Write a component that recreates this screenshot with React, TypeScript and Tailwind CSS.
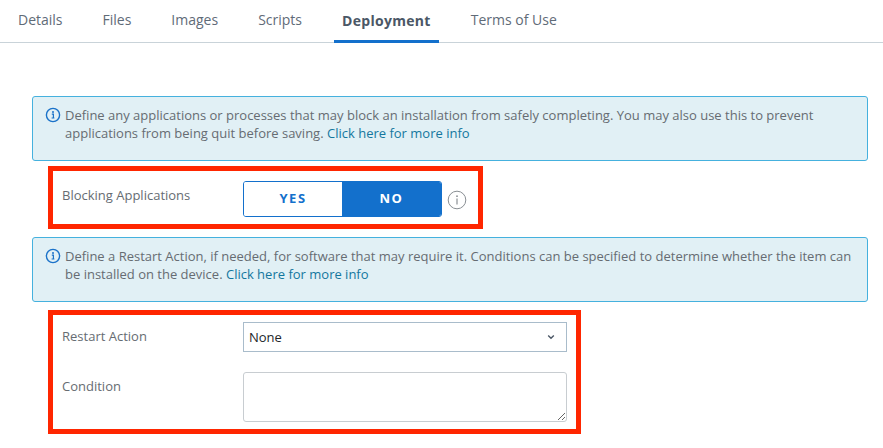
import { useState } from 'react';

const TABS = ['Details', 'Files', 'Images', 'Scripts', 'Deployment', 'Terms of Use'];

function InfoIcon({ className }: { className: string }) {
  return (
    <svg viewBox="0 0 16 16" fill="none" className={className}>
      <circle cx="8" cy="8" r="6.6" stroke="currentColor" strokeWidth="1.4" />
      <circle cx="8" cy="4.9" r="1" fill="currentColor" />
      <path d="M6.8 7.1H8.4V11H9.4M6.6 11H9.4" stroke="currentColor" strokeWidth="1.2" />
    </svg>
  );
}

function Alert({ children }: { children: React.ReactNode }) {
  return (
    <div className="flex h-[65px] rounded-[3px] border border-[#45b1de] bg-[#e1f0f5] pl-[12px] pr-[12px] pt-[9px] text-[13px] leading-[18px] text-[#666c72]">
      <InfoIcon className="mr-[4px] mt-[1px] h-[16px] w-[16px] shrink-0 text-[#1a72c9]" />
      <p>{children}</p>
    </div>
  );
}

export default function App() {
  const [blocking, setBlocking] = useState(false);

  return (
    <div className="h-[448px] w-[883px] overflow-hidden bg-white font-['Open_Sans',sans-serif]">
      <div className="flex h-[43px] gap-[24px] border-b border-[#c9d3d9] pl-[10px]">
        {TABS.map((tab) => (
          <div
            key={tab}
            className={`-mb-px flex h-[43px] items-center px-[8px] text-[14px] ${tab === 'Deployment' ? 'border-b-[3px] border-[#1370cc] pt-[1px] font-bold tracking-[0.3px] text-[#4b5766]' : 'pb-[4px] text-[#5f6b78]'}`}
          >
            {tab}
          </div>
        ))}
      </div>

      <div className="ml-[32px] w-[836px] pt-[53px]">
        <Alert>
          Define any applications or processes that may block an installation from safely completing. You may also use this to prevent
          <br />
          applications from being quit before saving. <span className="text-[#14779e]">Click here for more info</span>
        </Alert>

        <div className="ml-[16px] mt-[5px] flex h-[63px] w-[435px] border-[5px] border-[#ff2600] pl-[9px] pt-[10px]">
          <span className="w-[181px] pt-[5px] text-[13px] leading-[18px] text-[#666c72]">Blocking Applications</span>
          <div className="flex h-[36px] w-[199px] overflow-hidden rounded-[3px] border border-[#1370cc] text-[13px] font-bold tracking-[0.12em]">
            <button type="button" onClick={() => setBlocking(true)} className={`w-[98px] ${blocking ? 'bg-[#1370cc] text-white' : 'bg-white text-[#1370cc]'}`}>
              YES
            </button>
            <button type="button" onClick={() => setBlocking(false)} className={`flex-1 ${blocking ? 'bg-white text-[#1370cc]' : 'bg-[#1370cc] text-white'}`}>
              NO
            </button>
          </div>
          <svg viewBox="0 0 20 20" fill="none" className="ml-[5px] mt-[9px] h-[20px] w-[20px] text-[#8a8f94]">
            <circle cx="10" cy="10" r="8.8" stroke="currentColor" strokeWidth="1" />
            <circle cx="10" cy="6.2" r="0.9" fill="currentColor" />
            <path d="M10 8.6V14.4" stroke="currentColor" strokeWidth="1.2" />
          </svg>
        </div>

        <div className="mt-[8px]">
          <Alert>
            Define a Restart Action, if needed, for software that may require it. Conditions can be specified to determine whether the item can
            <br />
            be installed on the device. <span className="text-[#14779e]">Click here for more info</span>
          </Alert>
        </div>

        <div className="ml-[16px] mt-[8px] w-[533px] border-[5px] border-[#ff2600] pb-[7px] pl-[9px] pt-[7px]">
          <div className="flex">
            <span className="w-[181px] pt-[5px] text-[13px] leading-[18px] text-[#666c72]">Restart Action</span>
            <div className="flex h-[30px] w-[324px] items-center justify-between border border-[#a9bccb] pl-[5px] pr-[11px] text-[13px] text-[#22262a]">
              <span className="pt-[2px]">None</span>
              <svg viewBox="0 0 8 6" fill="none" className="h-[6px] w-[8px] text-[#4b5766]">
                <path d="M1.2 1.5L4 4.3L6.8 1.5" stroke="currentColor" strokeWidth="1.4" />
              </svg>
            </div>
          </div>
          <div className="mt-[20px] flex">
            <span className="w-[181px] pt-[5px] text-[13px] leading-[18px] text-[#666c72]">Condition</span>
            <textarea className="block h-[50px] w-[324px] rounded-[3px] border border-[#c8cdd1] bg-white outline-none" />
          </div>
        </div>
      </div>
    </div>
  );
}
